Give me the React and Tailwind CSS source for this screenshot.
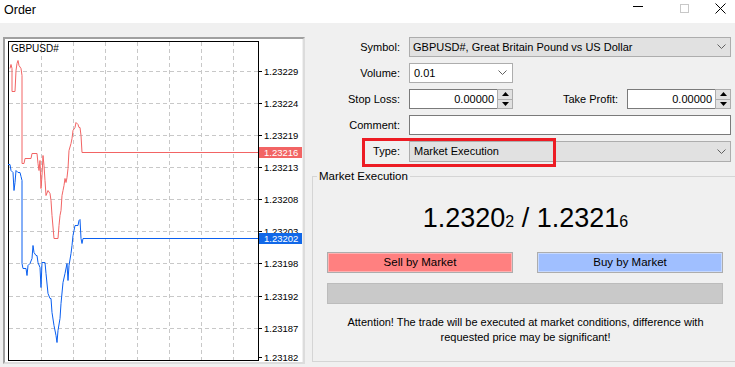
import React from "react";

const redPts = [
  [10, 68], [11, 64], [12, 68], [12, 91], [15, 91], [16, 70], [17, 63], [18, 60], [19, 65], [21, 68],
  [22, 75], [22, 163], [24, 163], [25, 158], [31, 158], [32, 153], [37, 153], [38, 163], [39, 170],
  [40, 160], [41, 188], [42, 175], [43, 155], [44, 165], [45, 180], [46, 195], [48, 190], [50, 193],
  [51, 200], [52, 215], [54, 238], [58, 238], [59, 225], [60, 215], [61, 210], [62, 195], [63, 190],
  [64, 185], [65, 178], [66, 182], [67, 177], [68, 168], [69, 150], [71, 143], [72, 138], [73, 130],
  [75, 127], [76, 122], [78, 124], [79, 127], [80, 127], [81, 135], [82, 152], [258, 152],
];

const bluePts = [
  [8, 164], [10, 164], [11, 170], [13, 172], [14, 190], [15, 182], [16, 170], [18, 172], [20, 172],
  [21, 176], [22, 180], [22, 263], [23, 268], [26, 268], [27, 275], [28, 265], [30, 263], [32, 258],
  [33, 245], [34, 252], [36, 255], [37, 255], [38, 262], [40, 267], [41, 287], [42, 262], [45, 262],
  [46, 273], [48, 293], [50, 298], [51, 298], [52, 312], [54, 325], [56, 335], [57, 342], [58, 330],
  [60, 318], [61, 303], [63, 282], [65, 273], [67, 263], [68, 280], [69, 265], [71, 253], [72, 245],
  [73, 235], [74, 230], [75, 225], [78, 225], [79, 220], [80, 219], [81, 238], [82, 243], [83, 238],
  [258, 238],
];

const levels = [
  ["1.23229", 71], ["1.23224", 103], ["1.23219", 135], ["1.23213", 167], ["1.23208", 199],
  ["1.23203", 231], ["1.23198", 263], ["1.23192", 296], ["1.23187", 328], ["1.23182", 357],
];

const vlines = [41, 73, 105, 137, 169, 201, 233];

function Chart() {
  const pts = (a) => a.map(([x, y]) => `${x},${y + 0.5}`).join(" ");
  return (
    <svg width="297" height="323" viewBox="5 39 297 323" className="block">
      <rect x="5" y="39" width="297" height="323" fill="#fff" />
      {vlines.map((x) => (
        <line key={x} x1={x + 0.5} y1="42" x2={x + 0.5} y2="360" stroke="#c8c8c8" strokeDasharray="4 3" />
      ))}
      {levels.slice(0, 9).map(([l, y]) => (
        <line key={l} x1="9" y1={y + 0.5} x2="258" y2={y + 0.5} stroke="#c8c8c8" strokeDasharray="4 3" />
      ))}
      <rect x="8.5" y="41.5" width="250" height="319" fill="none" stroke="#000" />
      {levels.map(([l, y]) => (
        <g key={l}>
          <line x1="258" y1={y + 0.5} x2="262" y2={y + 0.5} stroke="#000" />
          <text x="264" y={y + 4} fontSize="9.5" fill="#000" fontFamily="'Liberation Sans', Arial, sans-serif">
            {l}
          </text>
        </g>
      ))}
      <text x="11" y="52" fontSize="10" fill="#000" fontFamily="'Liberation Sans', Arial, sans-serif">
        GBPUSD#
      </text>
      <polyline points={pts(bluePts)} fill="none" stroke="#0a5ff0" strokeWidth="1" />
      <polyline points={pts(redPts)} fill="none" stroke="#f26464" strokeWidth="1" />
      <rect x="259" y="147" width="43" height="11" fill="#f26464" />
      <text x="264" y="156" fontSize="9.5" fill="#fff" fontFamily="'Liberation Sans', Arial, sans-serif">1.23216</text>
      <rect x="259" y="233" width="43" height="11" fill="#1168e8" />
      <text x="264" y="242" fontSize="9.5" fill="#fff" fontFamily="'Liberation Sans', Arial, sans-serif">1.23202</text>
    </svg>
  );
}

function Chevron() {
  return (
    <svg width="9" height="6" viewBox="0 0 9 6" className="shrink-0">
      <polyline points="0.5,0.5 4.5,4.5 8.5,0.5" fill="none" stroke="#606060" strokeWidth="1" />
    </svg>
  );
}

function Spinner() {
  return (
    <div className="w-[16px] h-[20px] border border-[#adadad] bg-[#e1e1e1] flex flex-col">
      <div className="flex-1 flex items-center justify-center border-b border-[#adadad]">
        <svg width="7" height="4" viewBox="0 0 7 4"><polygon points="0,4 3.5,0 7,4" fill="#000" /></svg>
      </div>
      <div className="flex-1 flex items-center justify-center">
        <svg width="7" height="4" viewBox="0 0 7 4"><polygon points="0,0 3.5,4 7,0" fill="#000" /></svg>
      </div>
    </div>
  );
}

function Label({ children }) {
  return <div className="text-right text-[11px] text-black leading-[20px]">{children}</div>;
}

export default function App() {
  return (
    <div className="w-[735px] h-[367px] overflow-hidden bg-[#f0f0f0] flex flex-col font-['Liberation_Sans',Arial,sans-serif] text-black">
      {/* title bar */}
      <div className="h-[23px] bg-white flex items-center shrink-0">
        <div className="pl-[4px] text-[12.5px] leading-none -mt-[3px]">Order</div>
        <div className="ml-auto flex items-center h-full">
          <div className="w-[46px] flex justify-center">
            <div className="w-[10px] h-[1px] bg-black mt-[-6px]" />
          </div>
          <div className="w-[46px] flex justify-center">
            <div className="w-[9px] h-[9px] border border-[#c8c8c8] mt-[-6px]" />
          </div>
          <div className="w-[26px] flex justify-center mr-[2px]">
            <svg width="11" height="11" viewBox="0 0 11 11" className="mt-[-6px]">
              <path d="M0.5 0.5L10.5 10.5M10.5 0.5L0.5 10.5" stroke="#000" strokeWidth="1" />
            </svg>
          </div>
        </div>
      </div>

      <div className="flex flex-1 min-h-0">
        {/* chart panel */}
        <div className="ml-[3px] mt-[14px] w-[302px] h-[327px] border-2 border-t-[#a0a0a0] border-l-[#a0a0a0] border-r-[#dcdcdc] border-b-[#dcdcdc] shrink-0">
          <Chart />
        </div>

        {/* order form */}
        <div className="flex-1 flex flex-col pt-[14px]">
          <div className="grid grid-cols-[95px_1fr] gap-x-[9px] gap-y-[6px] pr-[4px]">
            <Label>Symbol:</Label>
            <div className="h-[20px] border border-[#adadad] bg-[#e1e1e1] flex items-center pl-[3px] pr-[4px] text-[11px]">
              <span className="flex-1">GBPUSD#, Great Britain Pound vs US Dollar</span>
              <Chevron />
            </div>

            <Label>Volume:</Label>
            <div className="w-[104px] h-[20px] border border-[#adadad] bg-white flex items-center pl-[4px] pr-[5px] text-[11px]">
              <span className="flex-1">0.01</span>
              <Chevron />
            </div>

            <Label>Stop Loss:</Label>
            <div className="flex items-center">
              <div className="w-[88px] h-[20px] border border-[#7a7a7a] border-r-0 bg-white text-right pr-[3px] text-[11px] leading-[18px]">0.00000</div>
              <Spinner />
              <div className="flex-1 text-right text-[11px] pr-[9px]">Take Profit:</div>
              <div className="w-[88px] h-[20px] border border-[#7a7a7a] border-r-0 bg-white text-right pr-[3px] text-[11px] leading-[18px]">0.00000</div>
              <Spinner />
            </div>

            <Label>Comment:</Label>
            <div className="h-[20px] border border-[#7a7a7a] bg-white" />

            <div className="relative">
              <Label>Type:</Label>
              <div className="absolute left-[57px] top-[-3px] w-[194px] h-[29px] border-[3px] border-[#ed1c24] z-10 pointer-events-none" />
            </div>
            <div className="h-[21px] border border-[#adadad] bg-[#e1e1e1] flex items-center pl-[4px] pr-[4px] text-[11px]">
              <span className="flex-1">Market Execution</span>
              <Chevron />
            </div>
          </div>

          {/* group box */}
          <fieldset className="ml-[7px] mr-[-4px] mt-[7px] h-[193px] border border-[#d5d5d5] px-[14px] pb-0 min-w-0">
            <legend className="ml-[-10px] px-[2px] text-[11.5px] leading-[14px]">Market Execution</legend>
            <div className="mt-[20px] flex justify-center items-baseline text-[27px] leading-[30px]">
              <span>1.2320</span>
              <span className="text-[16px]">2</span>
              <span>&nbsp;/&nbsp;1.2321</span>
              <span className="text-[16px]">6</span>
            </div>
            <div className="mt-[15px] flex justify-between pr-[1px]">
              <div className="w-[186px] h-[21px] border border-[#adadad] p-[1px] bg-[#ffb0b0]">
                <div className="h-full bg-[#ff8080] flex items-center justify-center text-[11.5px]">Sell by Market</div>
              </div>
              <div className="w-[186px] h-[21px] border border-[#adadad] p-[1px] bg-[#c6d9ff]">
                <div className="h-full bg-[#a0bfff] flex items-center justify-center text-[11.5px]">Buy by Market</div>
              </div>
            </div>
            <div className="mt-[10px] mr-[1px] h-[21px] border border-[#bcbcbc] bg-[#c9c9c9]" />
            <div className="mt-[11px] text-center text-[11px] leading-[15px]">
              Attention! The trade will be executed at market conditions, difference with
              <br />
              requested price may be significant!
            </div>
          </fieldset>
        </div>
      </div>
    </div>
  );
}
